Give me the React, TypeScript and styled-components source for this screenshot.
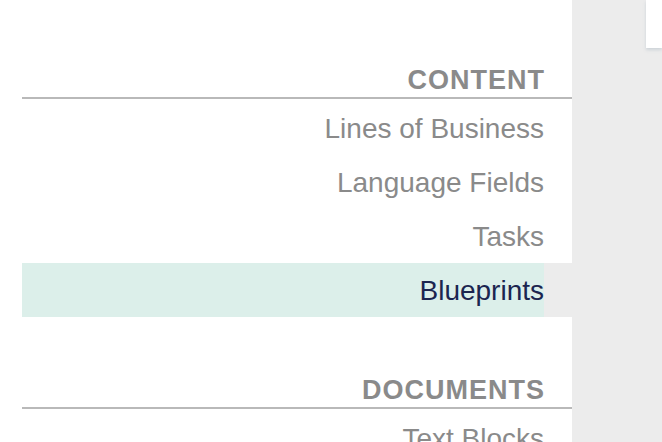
import React from "react";
import styled, { createGlobalStyle } from "styled-components";

const GlobalStyle = createGlobalStyle`
  html, body {
    margin: 0;
    padding: 0;
    background: #ececec;
    font-family: "Liberation Sans", Arial, sans-serif;
  }
`;

const sections = [
  {
    title: "Content",
    items: ["Lines of Business", "Language Fields", "Tasks", "Blueprints"],
  },
  {
    title: "Documents",
    items: ["Text Blocks", "Templates"],
  },
];

const active = "Blueprints";

const App = () => {
  return (
    <>
      <GlobalStyle />
      <Layout>
        <Sidebar>
          {sections.map((section) => (
            <Section key={section.title}>
              <SectionTitle>{section.title}</SectionTitle>
              <ItemList>
                {section.items.map((item) => (
                  <NavItem key={item} $active={item === active}>
                    {item}
                  </NavItem>
                ))}
              </ItemList>
            </Section>
          ))}
        </Sidebar>
        <Main>
          <TopCard />
        </Main>
      </Layout>
    </>
  );
};

const Layout = styled.div`
  display: flex;
  height: 100vh;
  overflow: hidden;
`;

const Sidebar = styled.nav`
  width: 550px;
  flex-shrink: 0;
  padding: 65px 0 0 22px;
  background: #ffffff;
`;

const Section = styled.section`
  & + & {
    margin-top: 58px;
  }
`;

const SectionTitle = styled.h2`
  margin: 0;
  padding: 0 27px 2px 0;
  height: 30px;
  line-height: 30px;
  font-size: 27px;
  font-weight: 700;
  letter-spacing: 1px;
  text-transform: uppercase;
  text-align: right;
  color: #8a8a8a;
  border-bottom: 2px solid #b9b9b9;
`;

const ItemList = styled.ul`
  list-style: none;
  margin: 2px 0 0;
  padding: 0;
`;

const NavItem = styled.li<{ $active?: boolean }>`
  height: 30px;
  padding: 13px 0 11px;
  line-height: 30px;
  font-size: 28px;
  text-align: right;
  color: ${({ $active }) => ($active ? "#1b2550" : "#8a8a8a")};
  background: ${({ $active }) => ($active ? "#dcefea" : "transparent")};
  border-right: 28px solid ${({ $active }) => ($active ? "#ececec" : "transparent")};
`;

const Main = styled.main`
  flex: 1;
  padding-left: 74px;
`;

const TopCard = styled.div`
  height: 48px;
  background: #ffffff;
  box-shadow: 0 2px 3px rgba(150, 165, 180, 0.35);
`;

export default App;
